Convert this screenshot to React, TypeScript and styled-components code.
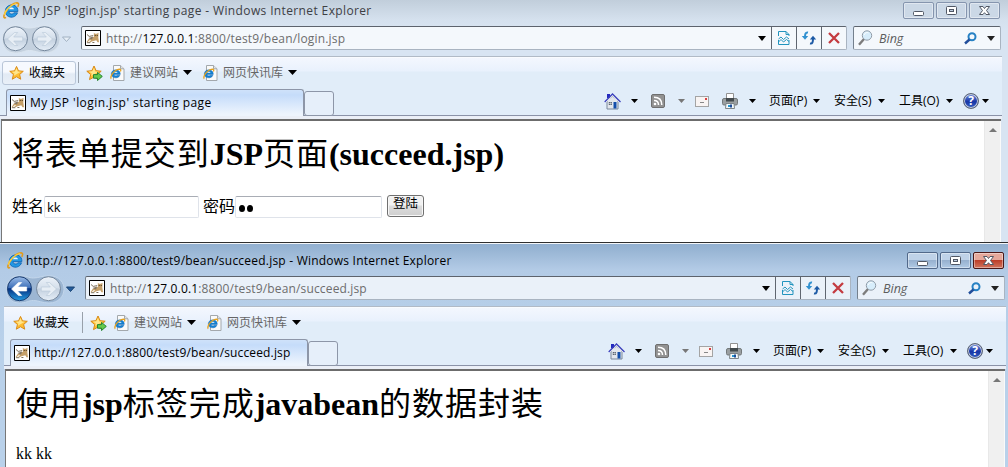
import React from "react";
import styled, { createGlobalStyle, css } from "styled-components";

const UI = `"Open Sans", "Noto Sans CJK SC", sans-serif`;

const GlobalStyle = createGlobalStyle`
  * { box-sizing: border-box; }
  html, body { margin: 0; background: #fff; }
  body { width: 1008px; height: 467px; overflow: hidden; font: 12px/16px ${UI}; color: #000; }
`;

const Frame = styled.section<{ $active?: boolean }>`
  display: flex;
  flex-direction: column;
  width: 1008px;
  height: ${p => (p.$active ? 223 : 242)}px;
  overflow: hidden;
  padding: ${p => (p.$active ? "6px 2px 0 4px" : "0 6px 0 0")};
  background: ${p =>
    p.$active
      ? "linear-gradient(#92b0d0 0, #98b5d4 6px, #b3cbe6 26px, #b9d1ea 100px)"
      : "linear-gradient(#c1cedb 0, #d5e1ee 20px, #d8e4f2 30px)"};
`;

const Divider = styled.div`
  height: 2px;
  width: 1008px;
  background: #f2f5f8;
  border-top: 1px solid #2e2e2e;
`;

const TitleBar = styled.header`
  flex: none;
  display: flex;
  align-items: flex-start;
  height: 26px;
  padding: 2px 0 0 3px;
`;

const Title = styled.h2<{ $active?: boolean; $spacing: number }>`
  flex: 1;
  margin: 1px 0 0 2px;
  font: 12px/16px ${UI};
  letter-spacing: ${p => p.$spacing}px;
  color: ${p => (p.$active ? "#000" : "#3d4045")};
  white-space: nowrap;
`;

const Caption = styled.span<{ $kind: "off" | "on" | "close" }>`
  display: flex;
  align-items: center;
  justify-content: center;
  width: 31px;
  height: 17px;
  margin-right: 2px;
  border-radius: 2px;
  border: 1px solid ${p => (p.$kind === "off" ? "#8595ae" : p.$kind === "on" ? "#52698a" : "#4a1717")};
  box-shadow: inset 0 0 0 1px rgba(255, 255, 255, 0.4);
  background: ${p =>
    p.$kind === "off"
      ? "#cbd8e6"
      : p.$kind === "on"
        ? "linear-gradient(#bfd2e8 45%, #97b1cf 50%, #b1cae5)"
        : "linear-gradient(#e5a89b 45%, #bd3f2a 50%, #d0755f)"};
`;

const Captions = styled.div`
  display: flex;
`;

const AddressRow = styled.div`
  flex: none;
  display: flex;
  align-items: flex-start;
  height: 30px;
  padding-left: 2px;
`;

const NavCluster = styled.div`
  width: 79px;
  height: 28px;
  margin-top: -1px;
`;

const Field = styled.div<{ $width: number; $active?: boolean }>`
  display: flex;
  align-items: center;
  width: ${p => p.$width}px;
  height: 24px;
  border: 1px solid #a9b4c1;
  border-top-color: #5d636d;
  border-left-color: #74808d;
  border-radius: 2px;
  background: ${p => (p.$active ? "#eaf1f9" : "#f4f8fc")};
`;

const Url = styled.span<{ $spacing: number }>`
  flex: 1;
  margin-left: 5px;
  padding-top: 2px;
  color: #6d6d6d;
  letter-spacing: ${p => p.$spacing}px;
  b { font-weight: 400; color: #000; }
`;

const FieldButton = styled.span`
  display: flex;
  align-items: center;
  justify-content: center;
  width: 25px;
  height: 22px;
  border-left: 1px solid #5f6670;
`;

const Search = styled(Field)`
  margin-left: 6px;
  padding-left: 4px;
`;

const Bing = styled.span`
  flex: 1;
  margin-left: 6px;
  padding-top: 2px;
  font-size: 12.5px;
  font-style: italic;
  color: #5d5d5d;
`;

const Bars = styled.div`
  flex: none;
  height: 63px;
  border-top: 1px solid #b1bac6;
  background: linear-gradient(#fff 0, #f3f7fe 1px, #e9f1fd 14px, #e1edf9 15px, #e1edf9 58px);
  border-bottom: 3px solid #ebeff7;
  width: 1002px;
`;

const FavoritesRow = styled.div`
  display: flex;
  align-items: center;
  height: 31px;
  padding-left: 2px;
`;

const FavButton = styled.span<{ $raised?: boolean }>`
  display: flex;
  align-items: center;
  width: 74px;
  height: 24px;
  padding-left: 6px;
  border: 1px solid transparent;
  border-radius: 3px;
  ${p =>
    p.$raised &&
    css`
      border-color: #b9c6d8;
      background: linear-gradient(#f6f9fe 45%, #e2eaf4 55%, #e9f0f8);
    `}
  span { margin-left: 4px; }
`;

const Separator = styled.i`
  width: 1px;
  height: 21px;
  margin: 0 7px 0 2px;
  background: #98a0aa;
`;

const FavLink = styled.span`
  display: flex;
  align-items: center;
  margin-left: 7px;
  color: #666;
  span { margin: 0 5px 0 5px; }
  & + & { margin-left: 11px; }
`;

const TabsRow = styled.div`
  display: flex;
  align-items: flex-end;
  height: 28px;
  border-bottom: 1px solid #8a92a8;
  padding-left: 6px;
`;

const Tab = styled.div<{ $spacing: number }>`
  display: flex;
  align-items: center;
  width: 298px;
  height: 27px;
  margin-bottom: -1px;
  padding-left: 3px;
  border: 1px solid #8d96a8;
  border-bottom: 0;
  border-radius: 3px 3px 0 0;
  background: linear-gradient(#cfe2fa, #c5dcfa 5px, #edf4fd 24px);
  letter-spacing: ${p => p.$spacing}px;
  white-space: nowrap;
  span { margin-left: 4px; }
`;

const NewTab = styled.div`
  width: 30px;
  height: 25px;
  margin-bottom: -1px;
  border: 1px solid #8d96a8;
  border-radius: 3px;
  background: #e6effa;
`;

const Commands = styled.div`
  display: flex;
  align-items: center;
  height: 28px;
  margin-left: 270px;
`;

const Command = styled.span<{ $width: number }>`
  display: flex;
  align-items: center;
  width: ${p => p.$width}px;
  white-space: nowrap;
`;

const CommandIcon = styled.span<{ $slot: number }>`
  display: flex;
  flex: none;
  width: ${p => p.$slot}px;
`;

const Viewport = styled.main`
  flex: 1;
  min-height: 0;
  display: flex;
  justify-content: space-between;
  width: 1000px;
  margin-left: 1px;
  background: #fff;
  border-left: 1px solid #777;
  border-top: 2px solid #6c6c6c;
`;

const Document = styled.div`
  padding-left: 10px;
  font: 16px/20px "Liberation Serif", "Noto Sans CJK SC", serif;
`;

const Heading = styled.h1`
  margin: 13px 0 0 0;
  font: bold 32px/40px "Liberation Serif", "Noto Sans CJK SC", serif;
  white-space: nowrap;
`;

const Han = styled.span`
  font-weight: 400;
  letter-spacing: 0.95px;
`;

const Form = styled.div`
  display: flex;
  align-items: center;
  height: 24px;
  margin-top: 21px;
`;

const Input = styled.span<{ $width: number }>`
  display: flex;
  align-items: center;
  width: ${p => p.$width}px;
  height: 22px;
  margin-right: ${p => (p.$width > 150 ? 4 : 5)}px;
  padding-left: 2px;
  border: 1px solid #dfe3ea;
  border-top-color: #a9adb5;
  border-radius: 2px;
  font: 13px/16px ${UI};
`;

const Dot = styled.i`
  width: 6px;
  height: 7px;
  margin: 2px 1px 0 1px;
  border-radius: 50%;
  background: #000;
`;

const Submit = styled.span`
  width: 37px;
  height: 22px;
  margin-top: -2px;
  border: 1px solid #707070;
  border-radius: 3px;
  background: linear-gradient(#f2f2f2 45%, #dcdcdc 50%, #cfcfcf);
  box-shadow: inset 0 0 0 1px #f7f7f7;
  font: 12.5px/14px "Noto Sans CJK SC", sans-serif;
  text-align: center;
`;

const Result = styled.p`
  margin: 20px 0 0;
`;

const Scrollbar = styled.div`
  width: 17px;
  padding: 0 0 0 4px;
  background: #f0f0f0;
  border-left: 1px solid #e8e8e8;
  border-right: 1px solid #fafafa;
`;

const Arrow = ({ s = 9, c = "#000" }: { s?: number; c?: string }) => (
  <svg width={s} height={s === 7 ? 4 : 5} viewBox="0 0 10 5" preserveAspectRatio="none"><path d="M0 0h10L5 5z" fill={c} /></svg>
);

const IELogo = () => (
  <svg width="17" height="17" viewBox="0 0 16 16" fill="none">
    <path d="M14 9H5.600c.2 2.700 3.600 3 4.600 1.200h3.500C11.500 16.500 2 15.300 2.200 8.500 2.400 1 14.500.600 14 9Z" fill="#2297e4" stroke="#0d64b4" strokeWidth=".8" />
    <path d="M5.600 6.900c.6-2.200 4.300-2.200 4.800 0Z" fill="#eef8ff" />
    <path d="M2.800 14.400C-.300 16.600.400 10.800 4.300 6.800M7.200 3.300C11.600.2 16.600-.7 13.900 4.500" stroke="#e09a1c" strokeWidth="1.500" />
    <path d="M1.300 12C2.500 7 7.500 2.700 12.500 1.300" stroke="#f9cd42" strokeWidth="1.300" />
  </svg>
);

const PageIcon = () => (
  <svg width="15" height="16" viewBox="0 0 15 16">
    <path d="M3.500.5h7l3.500 3.300v11.700H3.500z" fill="#fafafa" stroke="#a3a8ac" />
    <path d="M10.500.5v3.300H14" fill="#e1e1e1" stroke="#a3a8ac" />
    <path d="M10.300 9.400H4.100c.1 1.500 2.400 1.700 3.100.8h2.700c-1.300 4-8.600 3.300-8.600-1.100.1-5.800 9.300-5.600 9 .3Z" fill="#1581d2" stroke="#0c61ad" strokeWidth=".4" />
    <path d="M4.200 7.700c.4-1.400 2.900-1.400 3.300 0z" fill="#fff" />
    <path d="M1.300 13.600C-.500 12.400 3.500 4.900 9.400 4.200c1.500 0 1.600 1 1 2.300" fill="none" stroke="#e6a321" strokeWidth="1.300" />
  </svg>
);

const Star = ({ add }: { add?: boolean }) => (
  <svg width={add ? 17 : 16} height="16" viewBox="0 0 17 16">
    <path d="m8 1 2.100 4.700 5.100.5-3.900 3.400 1.200 5L8 12l-4.500 2.600 1.200-5L.8 6.200l5.100-.5z" fill="#ffbd30" stroke="#d88916" strokeLinejoin="round" />
    <path d="m8 2.800 1.300 3.600 3.400.4L5 11l.8-2.600-3-1.800 3.500-.3z" fill="#ffe58b" />
    {add && <path d="M7.500 9.600h4V7.400l4.800 4-4.800 4.100v-2.300h-4z" fill="#65c94c" stroke="#238533" />}
  </svg>
);

const TomcatIcon = () => (
  <svg width="16" height="16" viewBox="0 0 16 16">
    <path d="M.5.5h15v15H.5z" fill="#fff" stroke="#000" />
    <path d="m8.800 2.800 1.200 1h1.900l1.600-1-.2 4.700.7 4.800h-1.500l-1.200-2-3.800.9-2 1.100-1.300-.3 2-2-1.700.3-2 2H1.500l2.300-3.600L9 6.700z" fill="#c5a06a" />
    <path d="m2 4.500 2.200 1.900 4-.8M2.100 12.700h3.200M7.400 12.500h2" fill="none" stroke="#6e6049" strokeWidth=".9" />
    <path d="m3.500 8 4.700-1.500L7 9.500z" fill="#807462" />
    <path d="M9.800 5h.8v1h-.8zm2 0h.8v1h-.8z" fill="#322611" />
  </svg>
);

const NavButtons = ({ active }: { active?: boolean }) => (
  <svg width="74" height="29" viewBox="0 0 74 29">
    <defs>
      <linearGradient id="glassBlue" x2="0" y2="1"><stop stopColor="#9bbce8" /><stop offset=".46" stopColor="#3e70b9" /><stop offset=".5" stopColor="#053080" /><stop offset="1" stopColor="#239be0" /></linearGradient>
      <linearGradient id="glassPale" x2="0" y2="1"><stop stopColor="#edf3fa" /><stop offset=".48" stopColor="#d4dfeb" /><stop offset=".5" stopColor="#c3d0df" /><stop offset="1" stopColor="#e5eef7" /></linearGradient>
    </defs>
    <path d="M13 .7c8 0 9 2.300 14.500 2.300S36 .7 43 .7C64 1 62 28 43 28c-7 0-10-2.500-15.500-2.500S21 28 13 28C-4 28-4 .7 13 .7Z" fill={active ? "#9cb6d3" : "#c4d1df"} stroke={active ? "#c3d6eb" : "#dce6f0"} />
    <circle cx="13.500" cy="13.700" r="12" fill={active ? "url(#glassBlue)" : "url(#glassPale)"} stroke={active ? "#1c3e72" : "#75879c"} />
    <circle cx="42.500" cy="13.700" r="12" fill="url(#glassPale)" stroke="#75879c" />
    <path d="m5.500 14 7-6.500h3.200l-4 4.500h9v4h-9l4 4.500h-3.200z" fill={active ? "#fff" : "#e7eef5"} stroke={active ? "#fff" : "#b7c7d6"} strokeWidth=".6" />
    <path d="m50.500 14-7-6.500h-3.200l4 4.500h-9v4h9l-4 4.500h3.200z" fill="#e7eef5" stroke="#b7c7d6" strokeWidth=".6" />
    <path d="M60.500 12h8L64.500 16.500z" fill={active ? "#245d9d" : "#e7eff7"} stroke={active ? "#194373" : "#a2b2c3"} strokeLinejoin="round" />
  </svg>
);

const BrokenPage = () => (
  <svg width="12" height="16" viewBox="0 0 12 16" fill="none" stroke="#2294be">
    <path d="M.5 6V1.500h7.500l3 3V6M8 1.500v3h3M.5 10v4.500H11V10" />
    <path d="m.5 9 2.500-2 2.500 2.500L8.500 7l2.500 2M.5 12 3 9.500 5.500 12l3-2.500L11 11.500" />
  </svg>
);
const Refresh = () => (
  <svg width="16" height="14" viewBox="0 0 16 14" fill="none" strokeWidth="2">
    <path d="M7 1.500C4.500 1 4 3 4 6" stroke="#3191d0" /><path d="M9 12.500c2.500.5 3-1.500 3-5" stroke="#1d5aa5" />
    <path d="M.8 5h6.400L4 8.800z" fill="#3191d0" /><path d="M8.800 8.500h6.400L12 4.700z" fill="#1d5aa5" />
  </svg>
);
const Stop = () => (
  <svg width="12" height="12" viewBox="0 0 12 12" stroke="#c43b40" strokeWidth="2.300"><path d="m1 1 10 10M11 1 1 11" /></svg>
);
const Magnifier = ({ blue }: { blue?: boolean }) => blue ? (
  <svg width="13" height="13" viewBox="0 0 13 13" fill="none"><circle cx="8" cy="4.800" r="3.500" stroke="#2681c4" strokeWidth="2" /><path d="m5.500 7.500-4.500 4" stroke="#214e9b" strokeWidth="2.400" /></svg>
) : (
  <svg width="15" height="16" viewBox="0 0 15 16" fill="none"><path d="m6 9-5 5.700" stroke="#7c7c7c" strokeWidth="2.400" /><circle cx="9" cy="5.500" r="4.700" fill="#d7edfb" stroke="#909ba7" /><path d="M6.200 5C7 2.200 10 2.200 10.500 3" stroke="#fff" /></svg>
);

const Home = () => (
  <svg width="17" height="17" viewBox="0 0 17 17">
    <path d="M3 7.500 8.500 3 14 7.500V16H3z" fill="#e3e7ed" stroke="#78879b" />
    <path d="M3 1h3v4H3z" fill="#242bbf" /><path d="M.7 9 8.500 1l8 8" fill="none" stroke="#3c41bd" strokeWidth="1.300" /><path d="M1.700 9.300 8.500 2.500l6.800 6.800" fill="none" stroke="#e8ecf7" strokeWidth=".8" />
    <path d="M9.500 9h3v6.500h-3z" fill="#134eaa" /><path d="M4.800 9h3v3h-3z" fill="#4a5665" /><path d="M6.300 9v3m-1.500-1.500h3" stroke="#fff" strokeWidth=".5" />
  </svg>
);
const Rss = () => (
  <svg width="14" height="14" viewBox="0 0 14 14" fill="none"><rect x=".5" y=".5" width="13" height="13" rx="1.500" fill="#929292" stroke="#6f6f6f" /><circle cx="4" cy="10" r="1.300" fill="#fff" /><path d="M3 6.500c3 0 4.500 1.500 4.500 4.500M3 3.300c5 0 7.800 2.700 7.800 7.700" stroke="#fff" strokeWidth="1.500" /></svg>
);
const Mail = () => (
  <svg width="14" height="11" viewBox="0 0 14 11"><rect x=".5" y=".5" width="13" height="10" fill="#f8f4f3" stroke="#a4a4a4" /><path d="M10 2h2v2h-2z" fill="#d94143" /><path d="M5 6.500h4" stroke="#888" /></svg>
);
const Printer = () => (
  <svg width="16" height="16" viewBox="0 0 16 16"><path d="M4.500.5h7V6h-7z" fill="#fff" stroke="#929292" /><rect x=".5" y="5.500" width="15" height="6.500" rx="1.500" fill="#9a9fa1" stroke="#74797b" /><path d="M4 5h8v3.500H4z" fill="#424a4d" /><path d="M4 10.500h8l.5 5h-9z" fill="#f5fafb" stroke="#7e8588" /><path d="M6 12h2v2H6z" fill="#2595d0" /><path d="M8 11.500h2v3H8z" fill="#1d4c98" /></svg>
);
const HelpBadge = styled.span`
  display: flex;
  align-items: center;
  justify-content: center;
  width: 16px;
  height: 16px;
  border: 1px solid #5d6675;
  border-radius: 50%;
  box-shadow: inset 0 0 0 1px #c8cfdc;
  background: linear-gradient(#718de0, #1736a6 55%, #365fc3);
  color: #fff;
  font: bold 12px/14px "Open Sans", sans-serif;
`;
const WindowGlyph = ({ kind }: { kind: "min" | "max" | "close" }) => (
  <svg width="13" height="12" viewBox="0 0 13 12" fill="none" stroke="#515865">
    {kind === "min" && <rect x="1.500" y="6.500" width="10" height="4" rx="1" fill="#fff" />}
    {kind === "max" && <><rect x="1.500" y="1.500" width="10" height="8" rx="1" fill="#fff" /><rect x="4.500" y="4.500" width="4" height="2" fill="#bccbdd" /></>}
    {kind === "close" && <path d="M1.500 1.500H5l1.500 2 1.500-2h3.500L8.500 5.500l3 4H8L6.500 7.700 5 9.500H1.500l3-4z" fill="#fff" />}
  </svg>
);

const CommandBar = () => (
  <Commands>
    <Command $width={47}><CommandIcon $slot={27}><Home /></CommandIcon><Arrow s={7} /></Command>
    <Command $width={44}><CommandIcon $slot={27}><Rss /></CommandIcon><Arrow s={7} c="#777" /></Command>
    <Command $width={27}><Mail /></Command>
    <Command $width={47}><CommandIcon $slot={27}><Printer /></CommandIcon><Arrow s={7} /></Command>
    <Command $width={65}><CommandIcon $slot={44}>页面(P)</CommandIcon><Arrow s={7} /></Command>
    <Command $width={65}><CommandIcon $slot={44}>安全(S)</CommandIcon><Arrow s={7} /></Command>
    <Command $width={64}><CommandIcon $slot={47}>工具(O)</CommandIcon><Arrow s={7} /></Command>
    <Command $width={27}><CommandIcon $slot={19}><HelpBadge>?</HelpBadge></CommandIcon><Arrow s={7} /></Command>
  </Commands>
);

type BrowserProps = {
  active?: boolean;
  title: string;
  path: string;
  tab: string;
  spacing: [number, number, number];
  children: React.ReactNode;
};

const Browser = ({ active, title, path, tab, spacing, children }: BrowserProps) => (
  <Frame $active={active}>
    <TitleBar>
      <IELogo />
      <Title $active={active} $spacing={spacing[0]}>{title}</Title>
      <Captions>
        <Caption $kind={active ? "on" : "off"}><WindowGlyph kind="min" /></Caption>
        <Caption $kind={active ? "on" : "off"}><WindowGlyph kind="max" /></Caption>
        <Caption $kind={active ? "close" : "off"}><WindowGlyph kind="close" /></Caption>
      </Captions>
    </TitleBar>
    <AddressRow>
      <NavCluster><NavButtons active={active} /></NavCluster>
      <Field $width={766} $active={active}>
        <CommandIcon $slot={3} /><TomcatIcon />
        <Url $spacing={spacing[1]}>http://<b>127.0.0.1</b>{path}</Url>
        <CommandIcon $slot={13}><Arrow s={8} /></CommandIcon>
        <FieldButton><BrokenPage /></FieldButton>
        <FieldButton><Refresh /></FieldButton>
        <FieldButton><Stop /></FieldButton>
      </Field>
      <Search $width={148} $active={active}>
        <Magnifier /><Bing>Bing</Bing>
        <CommandIcon $slot={23}><Magnifier blue /></CommandIcon>
        <CommandIcon $slot={13}><Arrow s={8} c="#222" /></CommandIcon>
      </Search>
    </AddressRow>
    <Bars>
      <FavoritesRow>
        <FavButton $raised={!active}><Star /><span>收藏夹</span></FavButton>
        <Separator />
        <Star add />
        <FavLink><PageIcon /><span>建议网站</span><Arrow /></FavLink>
        <FavLink><PageIcon /><span>网页快讯库</span><Arrow /></FavLink>
      </FavoritesRow>
      <TabsRow>
        <Tab $spacing={spacing[2]}><TomcatIcon /><span>{tab}</span></Tab>
        <NewTab />
        <CommandBar />
      </TabsRow>
    </Bars>
    <Viewport>
      <Document>{children}</Document>
      <Scrollbar>
        <svg width="8" height="12" viewBox="0 0 8 12"><path d="m0 11 4-4 4 4z" fill="#777" /></svg>
      </Scrollbar>
    </Viewport>
  </Frame>
);

export default function App() {
  return (
    <>
      <GlobalStyle />
      <Browser
        title="My JSP 'login.jsp' starting page - Windows Internet Explorer"
        path=":8800/test9/bean/login.jsp"
        tab="My JSP 'login.jsp' starting page"
        spacing={[0.37, 0.17, 0.43]}
      >
        <Heading><Han>将表单提交到</Han>JSP<Han>页面</Han>(succeed.jsp)</Heading>
        <Form>
          姓名<Input $width={155}>kk</Input>
          密码<Input $width={147}><Dot /><Dot /></Input>
          <Submit>登陆</Submit>
        </Form>
      </Browser>
      <Divider />
      <Browser
        active
        title="http://127.0.0.1:8800/test9/bean/succeed.jsp - Windows Internet Explorer"
        path=":8800/test9/bean/succeed.jsp"
        tab="http://127.0.0.1:8800/test9/bean/succeed.jsp"
        spacing={[0.22, 0.15, 0.14]}
      >
        <Heading><Han>使用</Han>jsp<Han>标签完成</Han>javabean<Han>的数据封装</Han></Heading>
        <Result>kk kk</Result>
      </Browser>
    </>
  );
}
